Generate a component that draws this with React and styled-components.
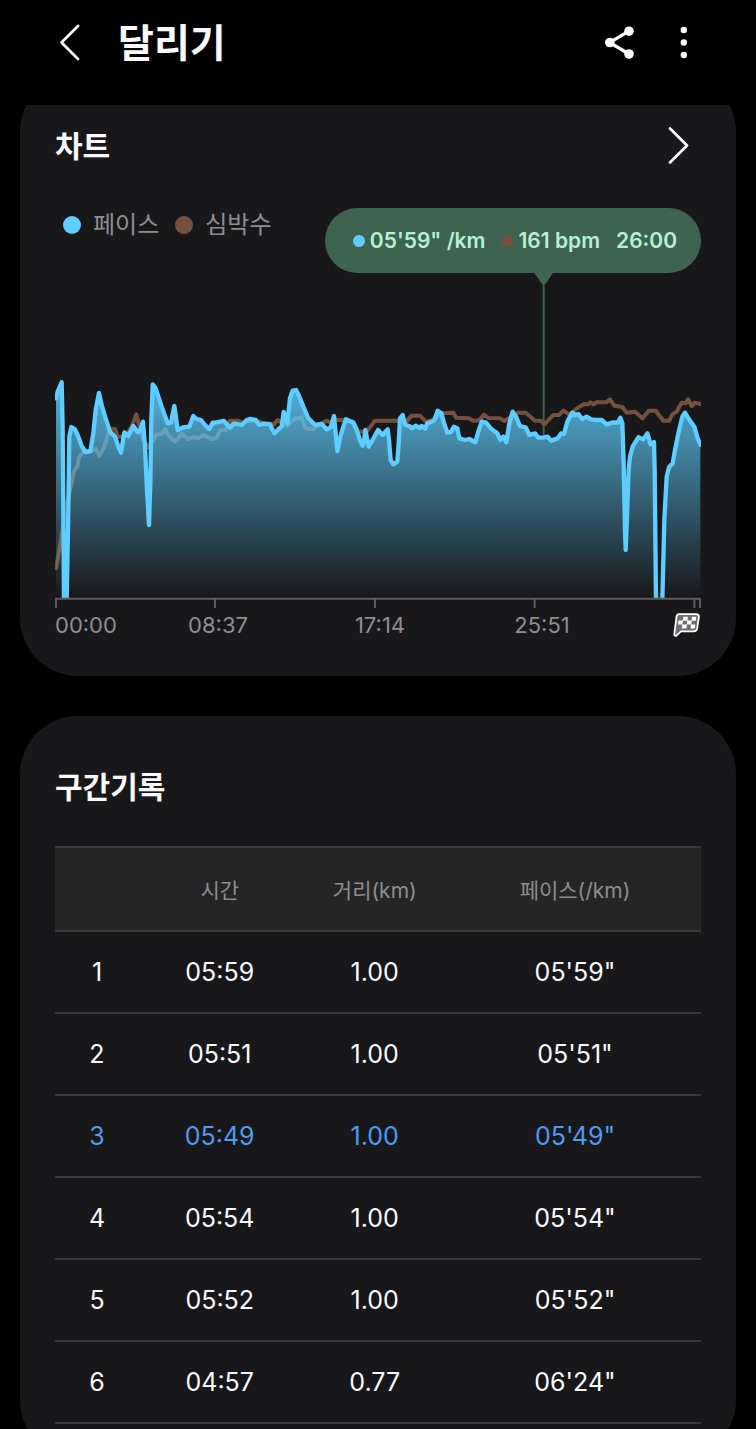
import styled, { createGlobalStyle } from "styled-components";

const GlobalStyle = createGlobalStyle`
  * {
    box-sizing: border-box;
  }

  body {
    margin: 0;
    background: #000;
    color: #fafafc;
    font-family: Inter, "Noto Sans CJK KR", sans-serif;
  }
`;

const Screen = styled.div`
  display: flex;
  flex-direction: column;
  height: 100vh;
`;

const Header = styled.header`
  display: flex;
  flex: none;
  align-items: center;
  gap: 16px;
  height: 105px;
  padding: 0 48px 20px 46px;
`;

const PageTitle = styled.h1`
  flex: 1;
  margin: 0;
  padding-left: 8px;
  font-size: 39px;
  font-weight: 700;
  line-height: 48px;
`;

const IconButton = styled.button`
  display: flex;
  align-items: center;
  justify-content: center;
  width: 48px;
  height: 48px;
  padding: 0;
  border: 0;
  background: none;
  color: inherit;
  cursor: pointer;
`;

const Content = styled.main`
  display: flex;
  flex: 1;
  flex-direction: column;
  gap: 40px;
  min-height: 0;
  padding: 0 20px;
  overflow-y: auto;
  scrollbar-width: none;
`;

const Card = styled.section`
  flex: none;
  margin-top: ${(props) => (props.$scrolled ? "-31px" : "0")};
  padding: 50px 35px 34px;
  border-radius: 58px;
  background: #18181a;
`;

const CardHeader = styled.div`
  display: flex;
  align-items: center;
  justify-content: space-between;
  height: 44px;
`;

const CardTitle = styled.h2`
  margin: 0;
  font-size: 30px;
  font-weight: 700;
  line-height: 42px;
`;

const ChartTop = styled.div`
  display: flex;
  align-items: flex-start;
  justify-content: space-between;
  margin-top: 40px;
`;

const Legend = styled.ul`
  display: flex;
  gap: 16px;
  margin: 0;
  padding: 0 0 0 8px;
  list-style: none;
`;

const LegendItem = styled.li`
  display: flex;
  align-items: center;
  gap: 12px;
  color: #8e8e92;
  font-size: 24px;
  line-height: 34px;
`;

const Dot = styled.span`
  flex: none;
  width: ${(props) => props.$size}px;
  height: ${(props) => props.$size}px;
  border-radius: 50%;
  background: ${(props) => props.$color};
`;

const Tooltip = styled.div`
  display: flex;
  align-items: center;
  gap: 16px;
  height: 65px;
  padding: 0 24px 0 28px;
  border-radius: 33px;
  background: #3e6350;
  color: #b9efd4;
  font-size: 21px;
  font-weight: 600;
  white-space: nowrap;
`;

const TooltipValue = styled.span`
  display: flex;
  align-items: center;
  gap: 5px;
`;

const ChartSvg = styled.svg`
  display: block;
  width: 100%;
  height: auto;
`;

const AxisLabels = styled.div`
  display: grid;
  grid-template-columns: 82fr 162fr 162fr 162fr 78fr;
  align-items: center;
  height: 34px;
  color: #8e8e92;
  font-size: 22px;
  text-align: center;

  span:first-child {
    text-align: left;
  }

  svg {
    justify-self: end;
  }
`;

const LapTable = styled.table`
  width: 100%;
  margin-top: 38px;
  border-collapse: collapse;
  table-layout: fixed;
  border-top: 2px solid #39393a;
  text-align: center;
`;

const HeadCell = styled.th`
  width: ${(props) => props.$width};
  height: 84px;
  padding: 0;
  border-bottom: 2px solid #39393a;
  background: #252525;
  color: #8e8e90;
  font-size: 21px;
  font-weight: 400;
`;

const LapRow = styled.tr`
  height: 82px;
  border-bottom: 2px solid #39393a;
  color: ${(props) => (props.$best ? "#4f9bf0" : "inherit")};
`;

const LapCell = styled.td`
  padding: 0;
  font-size: 25px;
`;

const PACE_COLOR = "#5ecdff";
const HEART_COLOR = "#74503f";
const BASELINE = 684;

const pace = [
  [3, 85], [8, 65], [20, 37], [23, 180], [25, 420], [27, 690], [35, 690], [40, 420], [43, 200],
  [49, 171], [60, 178], [70, 200], [80, 228], [92, 246], [106, 244], [115, 190], [122, 120],
  [132, 69], [140, 105], [152, 145], [165, 185], [180, 200], [190, 230], [198, 248], [208, 187],
  [220, 198], [235, 168], [248, 187], [255, 183], [264, 155], [270, 230], [275, 340], [282, 465],
  [286, 340], [289, 150], [293, 43], [302, 55], [320, 110], [338, 160], [348, 158], [358, 108],
  [364, 150], [368, 180], [385, 172], [403, 170], [415, 138], [425, 147], [438, 150], [450, 165],
  [463, 177], [473, 158], [480, 158], [507, 153], [525, 173], [537, 160], [560, 165], [575, 150],
  [585, 147], [602, 150], [613, 165], [627, 161], [645, 163], [653, 180], [659, 190], [673, 175],
  [680, 170], [686, 126], [697, 160], [705, 85], [713, 62], [723, 60], [731, 75], [745, 110],
  [760, 145], [780, 165], [800, 162], [815, 178], [827, 172], [837, 138], [842, 190], [847, 243],
  [855, 205], [865, 170], [873, 148], [895, 158], [905, 180], [915, 210], [923, 227], [927, 215],
  [931, 180], [941, 230], [950, 215], [969, 180], [983, 195], [998, 178], [1002, 210], [1007, 270],
  [1015, 283], [1027, 275], [1031, 220], [1035, 145], [1043, 135], [1051, 165], [1063, 168],
  [1071, 175], [1082, 167], [1093, 174], [1100, 168], [1110, 176], [1117, 160], [1137, 152],
  [1148, 122], [1159, 130], [1169, 165], [1177, 188], [1188, 186], [1197, 170], [1207, 175],
  [1213, 205], [1230, 210], [1243, 207], [1261, 217], [1270, 185], [1280, 155], [1293, 158],
  [1310, 178], [1327, 190], [1336, 210], [1345, 200], [1354, 217], [1363, 160], [1373, 125],
  [1383, 140], [1395, 168], [1412, 172], [1423, 195], [1440, 190], [1450, 203], [1465, 203],
  [1478, 200], [1488, 212], [1508, 205], [1518, 190], [1527, 192], [1537, 155], [1552, 128],
  [1560, 135], [1570, 132], [1582, 147], [1595, 140], [1608, 148], [1622, 150], [1640, 150],
  [1655, 163], [1675, 157], [1688, 158], [1696, 143], [1702, 160], [1706, 280], [1710, 480],
  [1712, 540], [1716, 440], [1721, 300], [1725, 260], [1733, 230], [1750, 202], [1765, 208],
  [1777, 190], [1787, 223], [1797, 216], [1799, 300], [1801, 500], [1803, 690], [1822, 690],
  [1828, 450], [1835, 320], [1842, 292], [1853, 280], [1860, 240], [1870, 190], [1882, 140],
  [1890, 128], [1900, 145], [1918, 170], [1928, 205], [1936, 224],
];

const heartRate = [
  [3, 595], [18, 510], [30, 430], [45, 360], [58, 300], [67, 290], [73, 260], [85, 245], [105, 243],
  [122, 235], [133, 257], [148, 230], [160, 190], [170, 176], [180, 177], [188, 200], [205, 200],
  [218, 190], [232, 165], [244, 133], [252, 165], [262, 205], [280, 232], [292, 215], [305, 193],
  [320, 192], [331, 178], [340, 195], [360, 215], [370, 205], [380, 190], [398, 207], [415, 202],
  [430, 205], [445, 195], [470, 207], [483, 205], [497, 180], [512, 180], [525, 152], [550, 152],
  [565, 160], [585, 152], [605, 152], [625, 160], [657, 163], [668, 150], [690, 165], [697, 168],
  [720, 145], [740, 143], [751, 175], [775, 178], [790, 165], [815, 152], [827, 158], [835, 150],
  [865, 150], [895, 155], [910, 185], [935, 185], [960, 152], [1030, 152], [1050, 160],
  [1070, 137], [1095, 137], [1113, 155], [1135, 150], [1160, 130], [1195, 128], [1203, 143],
  [1243, 145], [1255, 153], [1273, 150], [1287, 134], [1300, 144], [1335, 145], [1348, 153],
  [1370, 140], [1390, 128], [1412, 128], [1440, 152], [1457, 152], [1468, 163], [1485, 145],
  [1495, 135], [1512, 135], [1525, 122], [1545, 135], [1562, 118], [1585, 103], [1600, 103],
  [1606, 97], [1615, 103], [1625, 97], [1655, 97], [1665, 88], [1678, 107], [1702, 111],
  [1715, 128], [1740, 125], [1762, 145], [1782, 122], [1802, 122], [1825, 152], [1843, 152],
  [1852, 133], [1865, 125], [1880, 98], [1892, 100], [1899, 88], [1910, 108], [1920, 98],
  [1936, 102],
];

const ticks = [3, 480, 960, 1439, 1918, 1935];

const laps = [
  { id: 1, time: "05:59", distance: "1.00", pace: "05'59\"" },
  { id: 2, time: "05:51", distance: "1.00", pace: "05'51\"" },
  { id: 3, time: "05:49", distance: "1.00", pace: "05'49\"", best: true },
  { id: 4, time: "05:54", distance: "1.00", pace: "05'54\"" },
  { id: 5, time: "05:52", distance: "1.00", pace: "05'52\"" },
  { id: 6, time: "04:57", distance: "0.77", pace: "06'24\"" },
];

const toPath = (points) => "M" + points.map((p) => p.join(" ")).join("L");

function Chevron({ flip }) {
  return (
    <svg width="24" height="40" viewBox="0 0 24 40" fill="none" stroke="currentColor"
      strokeWidth="2.8" strokeLinecap="round" strokeLinejoin="round">
      <path d={flip ? "M5 2.500L22 19.500L5 36.500" : "M20 3L3.500 19.500L20 36"} />
    </svg>
  );
}

function ShareIcon() {
  return (
    <svg width="32" height="36" viewBox="0 0 32 36" fill="currentColor">
      <path d="M25 6.200L5.500 17.500L25 29" fill="none" stroke="currentColor" strokeWidth="3.200" />
      <circle cx="5.800" cy="17.500" r="4.800" />
      <circle cx="25" cy="6.200" r="4.800" />
      <circle cx="25" cy="29" r="4.800" />
    </svg>
  );
}

function MoreIcon() {
  return (
    <svg width="8" height="36" viewBox="0 0 8 36" fill="currentColor">
      <circle cx="3.800" cy="5" r="3.200" />
      <circle cx="3.800" cy="17.500" r="3.200" />
      <circle cx="3.800" cy="30" r="3.200" />
    </svg>
  );
}

function FinishFlag() {
  return (
    <svg width="28" height="24" viewBox="0 0 28 24">
      <path
        d="M6 1.200H23Q26.300 1.200 25.800 4.300L24.200 15.300Q23.700 18.300 20.800 18.300H8L3.500 22.600Q1.100 23.400 1.300 21L3.500 4Q3.800 1.200 6 1.200Z"
        fill="#6d6d6f" stroke="#fff" strokeWidth="1.8" strokeLinejoin="round"
      />
      <path
        d="M10.300 3.800h4.600l-.5 4h-4.600zM19 3.800h4.300l-.5 4h-4.300zM5.500 7.600h4.500l-.5 4h-4.500zM14.300 7.600h4.500l-.5 4h-4.500zM9.300 11.400h4.600l-.5 4h-4.600zM18 11.400h4.300l-.5 4h-4.300z"
        fill="#fff"
      />
    </svg>
  );
}

function PaceChart() {
  const pacePath = toPath(pace);

  return (
    <ChartSvg viewBox="0 -291 1938 1005" role="img" aria-label="페이스, 심박수">
      <defs>
        <linearGradient id="paceFill" gradientUnits="userSpaceOnUse" x1="0" y1="40" x2="0" y2={BASELINE}>
          <stop offset="0" stopColor={PACE_COLOR} stopOpacity="0.85" />
          <stop offset="1" stopColor={PACE_COLOR} stopOpacity="0" />
        </linearGradient>
        <clipPath id="plot">
          <rect x="0" y="0" width="1938" height={BASELINE} />
        </clipPath>
      </defs>

      {/* Selected time marker */}
      <path d="M1438 -291H1494L1471 -257H1461Z" fill="#3e6350" />
      <path d="M1466 -260V195" stroke="#3e6350" strokeWidth="6" />

      <g clipPath="url(#plot)" fill="none" strokeLinecap="round" strokeLinejoin="round">
        <path d={toPath(heartRate)} stroke={HEART_COLOR} strokeWidth="12" />
        <path d={`${pacePath}V${BASELINE}H3Z`} fill="url(#paceFill)" />
        <path d={pacePath} stroke={PACE_COLOR} strokeWidth="13" />
      </g>

      {/* Time axis */}
      <g fill="none" stroke="#5c5c5e" strokeWidth="6">
        <path d="M0 686H1938" />
        {ticks.map((x) => (
          <path key={x} d={`M${x} 686V714`} />
        ))}
      </g>
    </ChartSvg>
  );
}

function App() {
  return (
    <Screen>
      <GlobalStyle />
      <Header>
        <IconButton aria-label="뒤로">
          <Chevron />
        </IconButton>
        <PageTitle>달리기</PageTitle>
        <IconButton aria-label="공유">
          <ShareIcon />
        </IconButton>
        <IconButton aria-label="더보기">
          <MoreIcon />
        </IconButton>
      </Header>

      <Content>
        <Card $scrolled>
          <CardHeader>
            <CardTitle>차트</CardTitle>
            <IconButton aria-label="차트 열기">
              <Chevron flip />
            </IconButton>
          </CardHeader>
          <ChartTop>
            <Legend>
              <LegendItem>
                <Dot $size={18} $color={PACE_COLOR} />
                페이스
              </LegendItem>
              <LegendItem>
                <Dot $size={18} $color={HEART_COLOR} />
                심박수
              </LegendItem>
            </Legend>
            <Tooltip>
              <TooltipValue>
                <Dot $size={12} $color={PACE_COLOR} />
                05'59" /km
              </TooltipValue>
              <TooltipValue>
                <Dot $size={12} $color={HEART_COLOR} />
                161 bpm
              </TooltipValue>
              <span>26:00</span>
            </Tooltip>
          </ChartTop>
          <PaceChart />
          <AxisLabels>
            <span>00:00</span>
            <span>08:37</span>
            <span>17:14</span>
            <span>25:51</span>
            <FinishFlag />
          </AxisLabels>
        </Card>

        <Card>
          <CardTitle>구간기록</CardTitle>
          <LapTable>
            <thead>
              <tr>
                <HeadCell $width="13%" aria-label="구간" />
                <HeadCell $width="25%">시간</HeadCell>
                <HeadCell $width="23%">거리(km)</HeadCell>
                <HeadCell $width="39%">페이스(/km)</HeadCell>
              </tr>
            </thead>
            <tbody>
              {laps.map((lap) => (
                <LapRow key={lap.id} $best={lap.best}>
                  <LapCell>{lap.id}</LapCell>
                  <LapCell>{lap.time}</LapCell>
                  <LapCell>{lap.distance}</LapCell>
                  <LapCell>{lap.pace}</LapCell>
                </LapRow>
              ))}
            </tbody>
          </LapTable>
        </Card>
      </Content>
    </Screen>
  );
}

export default App;
